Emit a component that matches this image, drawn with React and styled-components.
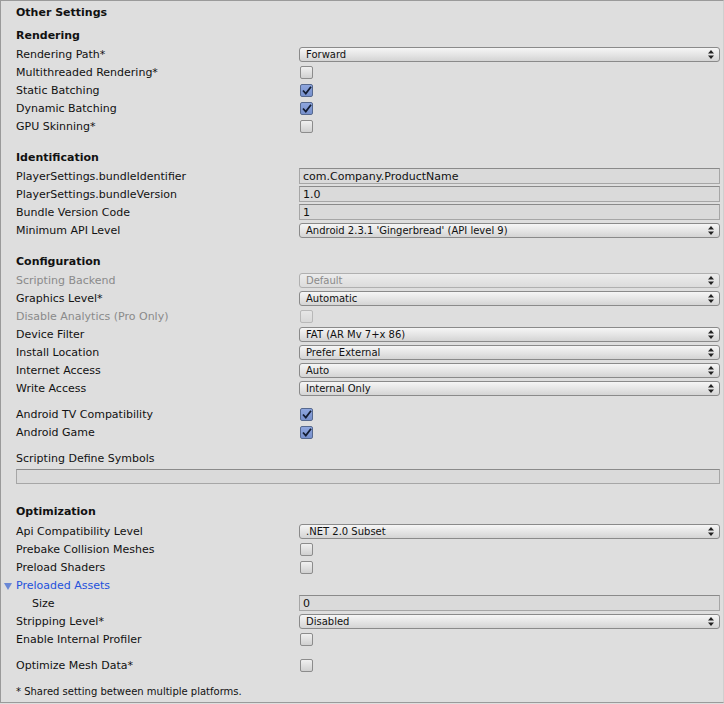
import React from 'react';
import styled, { createGlobalStyle } from 'styled-components';

const GlobalStyle = createGlobalStyle`
  html, body {
    margin: 0;
    padding: 0;
    background: #dedede;
  }
  body {
    font-family: "DejaVu Sans", Verdana, sans-serif;
    color: #111;
  }
`;

const Panel = styled.div`
  box-sizing: border-box;
  width: 724px;
  height: 703px;
  background: #dedede;
  border: 1px solid #9a9a9a;
  border-right-color: #cfcfcf;
  padding: 0 3px 0 15px;
  display: flex;
  flex-direction: column;
`;

const Title = styled.div`
  height: 23px;
  line-height: 23px;
  font-size: 11px;
  font-weight: bold;
`;

const SectionHeader = styled.div`
  box-sizing: border-box;
  height: ${p => p.$h || 19}px;
  margin-top: ${p => p.$mt || 0}px;
  padding-top: 2px;
  line-height: 16px;
  font-size: 11px;
  font-weight: bold;
`;

const Row = styled.div`
  display: grid;
  grid-template-columns: 283px 1fr;
  align-items: center;
  height: 18px;
  margin-top: ${p => p.$mt || 0}px;
`;

const Label = styled.div`
  position: relative;
  font-size: 11px;
  padding-top: 2px;
  line-height: 16px;
  white-space: nowrap;
  padding-left: ${p => (p.$indent ? 16 : 0)}px;
  color: ${p => (p.$disabled ? '#8a8a8a' : p.$link ? '#2451dc' : '#111')};
`;

const FoldArrow = styled.span`
  position: absolute;
  left: -12px;
  top: 7px;
  width: 0;
  height: 0;
  border-left: 4px solid transparent;
  border-right: 4px solid transparent;
  border-top: 7px solid #6a88d6;
`;

const Popup = styled.div`
  box-sizing: border-box;
  position: relative;
  height: 15px;
  border: 1px solid ${p => (p.$disabled ? '#b0b0b0' : '#8a8a8a')};
  border-radius: 3px;
  background: ${p =>
    p.$disabled
      ? 'linear-gradient(#ececec, #dcdcdc)'
      : 'linear-gradient(#f6f6f6, #e2e2e2 60%, #d4d4d4)'};
  font-size: 10px;
  line-height: 13px;
  padding-left: 6px;
  color: ${p => (p.$disabled ? '#8a8a8a' : '#111')};
  white-space: nowrap;
`;

const PopupArrows = styled.svg`
  position: absolute;
  right: 5px;
  top: 2px;
`;

const TextField = styled.div`
  box-sizing: border-box;
  height: ${p => p.$h || 16}px;
  margin-top: ${p => p.$mt || 0}px;
  border: 1px solid #a6a6a6;
  border-top-color: #8a8a8a;
  background: #dadada;
  font-size: 11px;
  line-height: 15px;
  padding-left: 3px;
  white-space: nowrap;
`;

const Box = styled.div`
  box-sizing: border-box;
  width: 13px;
  height: 13px;
  margin-left: 1px;
  border-radius: 2px;
  border: 1px solid ${p => (p.$checked ? '#56698f' : p.$disabled ? '#b8b8b8' : '#8c8c8c')};
  background: ${p =>
    p.$checked
      ? 'linear-gradient(#8ea6de, #7790cc)'
      : p.$disabled
      ? 'linear-gradient(#e6e6e6, #d8d8d8)'
      : 'linear-gradient(#f0f0f0, #d0d0d0)'};
  display: flex;
  align-items: center;
  justify-content: center;
`;

const Footnote = styled.div`
  margin-top: 8px;
  height: 18px;
  padding-top: 2px;
  line-height: 16px;
  font-size: 10px;
`;

function Arrows() {
  return (
    <PopupArrows width="6" height="9" viewBox="0 0 6 9">
      <path d="M3 0 L6 3.5 L0 3.5 Z M0 5.5 L6 5.5 L3 9 Z" fill="#222" />
    </PopupArrows>
  );
}

function Dropdown({ value, disabled }) {
  return (
    <Popup $disabled={disabled}>
      {value}
      <Arrows />
    </Popup>
  );
}

function Checkbox({ checked, disabled }) {
  return (
    <Box $checked={checked} $disabled={disabled}>
      {checked && (
        <svg width="10" height="9" viewBox="0 0 10 9">
          <path d="M1 4.5 L3.8 7.5 L9 0.8" stroke="#131d33" strokeWidth="1.8" fill="none" />
        </svg>
      )}
    </Box>
  );
}

function Field({ label, children, mt, disabled, indent, link, fold }) {
  return (
    <Row $mt={mt}>
      <Label $disabled={disabled} $indent={indent} $link={link}>
        {fold && <FoldArrow />}
        {label}
      </Label>
      <div>{children}</div>
    </Row>
  );
}

export default function App() {
  return (
    <>
      <GlobalStyle />
      <Panel>
        <Title>Other Settings</Title>

        <SectionHeader $mt={2}>Rendering</SectionHeader>
        <Field label="Rendering Path*"><Dropdown value="Forward" /></Field>
        <Field label="Multithreaded Rendering*"><Checkbox /></Field>
        <Field label="Static Batching"><Checkbox checked /></Field>
        <Field label="Dynamic Batching"><Checkbox checked /></Field>
        <Field label="GPU Skinning*"><Checkbox /></Field>

        <SectionHeader $mt={13}>Identification</SectionHeader>
        <Field label="PlayerSettings.bundleIdentifier"><TextField>com.Company.ProductName</TextField></Field>
        <Field label="PlayerSettings.bundleVersion"><TextField>1.0</TextField></Field>
        <Field label="Bundle Version Code"><TextField>1</TextField></Field>
        <Field label="Minimum API Level"><Dropdown value="Android 2.3.1 'Gingerbread' (API level 9)" /></Field>

        <SectionHeader $mt={13}>Configuration</SectionHeader>
        <Field label="Scripting Backend" disabled><Dropdown value="Default" disabled /></Field>
        <Field label="Graphics Level*"><Dropdown value="Automatic" /></Field>
        <Field label="Disable Analytics (Pro Only)" disabled><Checkbox disabled /></Field>
        <Field label="Device Filter"><Dropdown value="FAT (AR Mv 7+x 86)" /></Field>
        <Field label="Install Location"><Dropdown value="Prefer External" /></Field>
        <Field label="Internet Access"><Dropdown value="Auto" /></Field>
        <Field label="Write Access"><Dropdown value="Internal Only" /></Field>

        <Field label="Android TV Compatibility" mt={8}><Checkbox checked /></Field>
        <Field label="Android Game"><Checkbox checked /></Field>

        <Row $mt={8}>
          <Label>Scripting Define Symbols</Label>
        </Row>
        <TextField $h={15} $mt={2} />

        <SectionHeader $mt={18} $h={20}>Optimization</SectionHeader>
        <Field label="Api Compatibility Level"><Dropdown value=".NET 2.0 Subset" /></Field>
        <Field label="Prebake Collision Meshes"><Checkbox /></Field>
        <Field label="Preload Shaders"><Checkbox /></Field>
        <Field label="Preloaded Assets" link fold />
        <Field label="Size" indent><TextField>0</TextField></Field>
        <Field label="Stripping Level*"><Dropdown value="Disabled" /></Field>
        <Field label="Enable Internal Profiler"><Checkbox /></Field>
        <Field label="Optimize Mesh Data*" mt={8}><Checkbox /></Field>

        <Footnote>* Shared setting between multiple platforms.</Footnote>
      </Panel>
    </>
  );
}
